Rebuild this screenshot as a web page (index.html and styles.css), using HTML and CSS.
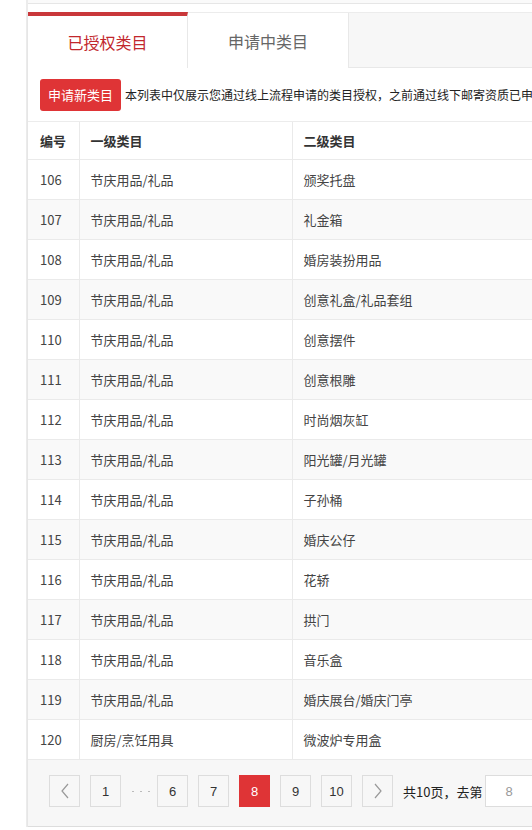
FILE: index.html
```html
<!DOCTYPE html>
<html>
<head>
<meta charset="utf-8">
<link rel="stylesheet" href="styles.css">
</head>
<body>
<div class="page">
  <div class="top-strip"></div>
  <div class="panel">
    <div class="tabs">
      <div class="tab active">已授权类目</div>
      <div class="tab">申请中类目</div>
    </div>
    <div class="toolbar">
      <button class="btn-apply">申请新类目</button>
      <span class="notice">本列表中仅展示您通过线上流程申请的类目授权，之前通过线下邮寄资质已申请的类目不在此列表中展示</span>
    </div>
    <table class="grid">
      <colgroup><col class="c1"><col class="c2"><col class="c3"></colgroup>
      <thead>
        <tr><th>编号</th><th>一级类目</th><th>二级类目</th></tr>
      </thead>
      <tbody>
        <tr><td>106</td><td>节庆用品/礼品</td><td>颁奖托盘</td></tr>
        <tr><td>107</td><td>节庆用品/礼品</td><td>礼金箱</td></tr>
        <tr><td>108</td><td>节庆用品/礼品</td><td>婚房装扮用品</td></tr>
        <tr><td>109</td><td>节庆用品/礼品</td><td>创意礼盒/礼品套组</td></tr>
        <tr><td>110</td><td>节庆用品/礼品</td><td>创意摆件</td></tr>
        <tr><td>111</td><td>节庆用品/礼品</td><td>创意根雕</td></tr>
        <tr><td>112</td><td>节庆用品/礼品</td><td>时尚烟灰缸</td></tr>
        <tr><td>113</td><td>节庆用品/礼品</td><td>阳光罐/月光罐</td></tr>
        <tr><td>114</td><td>节庆用品/礼品</td><td>子孙桶</td></tr>
        <tr><td>115</td><td>节庆用品/礼品</td><td>婚庆公仔</td></tr>
        <tr><td>116</td><td>节庆用品/礼品</td><td>花轿</td></tr>
        <tr><td>117</td><td>节庆用品/礼品</td><td>拱门</td></tr>
        <tr><td>118</td><td>节庆用品/礼品</td><td>音乐盒</td></tr>
        <tr><td>119</td><td>节庆用品/礼品</td><td>婚庆展台/婚庆门亭</td></tr>
        <tr><td>120</td><td>厨房/烹饪用具</td><td>微波炉专用盒</td></tr>
      </tbody>
    </table>
    <div class="footer">
      <div class="pager">
        <a class="pg arrow"><svg width="10" height="16" viewBox="0 0 10 16"><path d="M8 1 L2 8 L8 15" fill="none" stroke="#999" stroke-width="1.2"/></svg></a>
        <a class="pg">1</a>
        <span class="dots"><i></i><i></i><i></i></span>
        <a class="pg">6</a>
        <a class="pg">7</a>
        <a class="pg current">8</a>
        <a class="pg">9</a>
        <a class="pg">10</a>
        <a class="pg arrow"><svg width="10" height="16" viewBox="0 0 10 16"><path d="M2 1 L8 8 L2 15" fill="none" stroke="#999" stroke-width="1.2"/></svg></a>
        <span class="total">共10页，去第</span>
        <input class="goto" type="text" value="8">
        <span class="total">页</span>
      </div>
    </div>
  </div>
</div>
</body>
</html>
```
FILE: styles.css
```css
html, body {
  margin: 0;
  padding: 0;
  background: #fff;
  overflow: hidden;
}
body {
  font-family: "Noto Sans CJK SC", "Liberation Sans", sans-serif;
  font-size: 13px;
  color: #333;
}
.page {
  margin-left: 26px;
  width: 1000px;
  border-left: 2px solid #ececec;
}
.top-strip {
  height: 3px;
  background: #fafafa;
  border-bottom: 1px solid #e6e6e6;
  margin-bottom: 8px;
}
.panel {
  background: #fff;
  border-bottom: 1px solid #ddd;
  box-shadow: 0 2px 2px #d8d8d8;
}
.tabs {
  display: flex;
  height: 56px;
  box-sizing: border-box;
  background: #f7f7f7;
  border-top: 1px solid #ececec;
  border-bottom: 1px solid #e8e8e8;
}
.tab {
  width: 161px;
  box-sizing: border-box;
  display: flex;
  align-items: center;
  justify-content: center;
  font-size: 16px;
  color: #666;
  background: #fff;
  border-right: 1px solid #e8e8e8;
  margin-bottom: -1px;
}
.tab.active {
  width: 160px;
  color: #c2272d;
  border-top: 4px solid #c9373a;
  margin-top: -1px;
}
.toolbar {
  height: 54px;
  display: flex;
  align-items: center;
  padding-left: 12px;
  border-bottom: 1px solid #ececec;
  white-space: nowrap;
  overflow: hidden;
  box-sizing: border-box;
}
.btn-apply {
  height: 32px;
  padding: 0 8px;
  margin-top: 1px;
  border: none;
  border-radius: 3px;
  background: #df3436;
  color: #fff;
  font-family: inherit;
  font-size: 13px;
  line-height: 32px;
}
.notice {
  margin-left: 4px;
  font-size: 12px;
  color: #222;
}
.grid {
  width: 100%;
  border-collapse: collapse;
  table-layout: fixed;
}
.c1 { width: 51px; }
.c2 { width: 213px; }
.grid th, .grid td {
  text-align: left;
  padding: 0 0 0 11px;
  border-right: 1px solid #eaeaea;
  border-bottom: 1px solid #eaeaea;
  white-space: nowrap;
}
.grid th:first-child, .grid td:first-child {
  padding-left: 12px;
}
.grid th {
  height: 37px;
  font-weight: bold;
  color: #333;
}
.grid td {
  height: 39px;
  color: #444;
}
.grid tbody tr:nth-child(even) td {
  background: #f9f9f9;
}
.footer {
  height: 66px;
  background: #f7f7f7;
  padding-top: 15px;
  box-sizing: border-box;
}
.pager {
  display: flex;
  align-items: center;
  padding-left: 21px;
  white-space: nowrap;
}
.pg {
  width: 31px;
  height: 32px;
  box-sizing: border-box;
  border: 1px solid #ddd;
  background: #f7f7f7;
  display: flex;
  align-items: center;
  justify-content: center;
  margin-right: 10px;
  font-family: "Liberation Sans", "Noto Sans CJK SC", sans-serif;
  font-size: 13px;
  color: #333;
}
.pg.current {
  background: #df3436;
  border-color: #df3436;
  color: #fff;
}
.dots {
  width: 20px;
  margin-right: 6px;
  display: flex;
  justify-content: space-between;
  align-items: center;
  padding: 0 1px;
  box-sizing: border-box;
}
.dots i {
  width: 2px;
  height: 1px;
  background: #bbb;
}
.total {
  margin-left: 0;
  font-size: 13px;
  color: #222;
}
.goto {
  width: 60px;
  height: 32px;
  box-sizing: border-box;
  border: 1px solid #ddd;
  background: #fff;
  margin-left: 3px;
  padding: 0 0 0 19px;
  font-family: "Liberation Sans", sans-serif;
  font-size: 13px;
  color: #999;
}
```
